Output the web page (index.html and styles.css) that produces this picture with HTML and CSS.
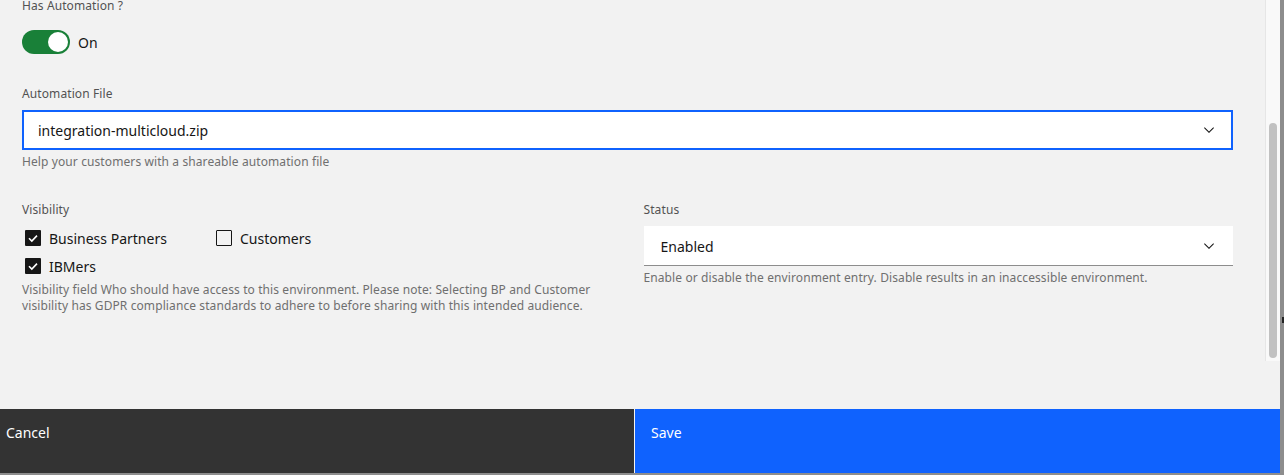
FILE: index.html
```html
<!DOCTYPE html>
<html lang="en">
<head>
<meta charset="utf-8">
<title>Environment settings</title>
<link rel="stylesheet" href="styles.css">
</head>
<body>
<div class="backdrop">
  <div class="modal">
    <div class="modal-body">
      <div class="content">
        <div class="form-item toggle-item">
          <div class="label label-first">Has Automation ?</div>
          <div class="toggle-row">
            <span class="toggle toggle-on"><span class="knob"></span></span>
            <span class="toggle-text">On</span>
          </div>
        </div>

        <div class="form-item file-item">
          <div class="label">Automation File</div>
          <div class="select select-focused">
            <span class="select-value">integration-multicloud.zip</span>
            <svg class="chevron" viewBox="0 0 16 16" width="16" height="16"><path d="M8 11L3 6l.7-.7L8 9.6l4.3-4.3.7.7z"/></svg>
          </div>
          <div class="helper">Help your customers with a shareable automation file</div>
        </div>

        <div class="row">
          <div class="col">
            <div class="label">Visibility</div>
            <div class="checks">
              <div class="check">
                <span class="box box-checked"><svg viewBox="0 0 16 16" width="16" height="16"><polyline points="4,8.2 6.8,11 12,5.6"/></svg></span>
                <span class="check-text">Business Partners</span>
              </div>
              <div class="check">
                <span class="box"></span>
                <span class="check-text">Customers</span>
              </div>
              <div class="check">
                <span class="box box-checked"><svg viewBox="0 0 16 16" width="16" height="16"><polyline points="4,8.2 6.8,11 12,5.6"/></svg></span>
                <span class="check-text">IBMers</span>
              </div>
            </div>
            <div class="helper">Visibility field Who should have access to this environment. Please note: Selecting BP and Customer visibility has GDPR compliance standards to adhere to before sharing with this intended audience.</div>
          </div>
          <div class="col">
            <div class="label">Status</div>
            <div class="select select-plain">
              <span class="select-value">Enabled</span>
              <svg class="chevron" viewBox="0 0 16 16" width="16" height="16"><path d="M8 11L3 6l.7-.7L8 9.6l4.3-4.3.7.7z"/></svg>
            </div>
            <div class="helper">Enable or disable the environment entry. Disable results in an inaccessible environment.</div>
          </div>
        </div>
      </div>
      <div class="scrollbar"><div class="thumb"></div></div>
    </div>
    <div class="modal-footer">
      <button class="btn btn-secondary" type="button">Cancel</button>
      <button class="btn btn-primary" type="button">Save</button>
    </div>
  </div>
  <span class="edge-mark"></span>
</div>
</body>
</html>
```

FILE: styles.css
```css
* { box-sizing: border-box; }

html, body {
  margin: 0;
  padding: 0;
}

body {
  width: 1284px;
  height: 475px;
  overflow: hidden;
  background: #8d8d8d;
  font-family: "Noto Sans", "Liberation Sans", sans-serif;
  color: #161616;
}

.backdrop {
  position: relative;
  width: 1284px;
  height: 475px;
}

.modal {
  width: 1280px;
  height: 473px;
  background: #f2f2f2;
  display: flex;
  flex-direction: column;
}

.modal-body {
  height: 361px;
  display: flex;
  overflow: hidden;
  margin-bottom: 48px;
}

.content {
  flex: 1;
  padding: 0 32px 0 22px;
}

.scrollbar {
  width: 15px;
  height: 361px;
  background: #f9f9f9;
  border-left: 1px solid #e6e6e6;
  padding: 123px 0 0 3px;
}

.thumb {
  width: 8px;
  height: 235px;
  border-radius: 4px;
  background: #c1c1c1;
}

/* labels & helpers */
.label {
  font-size: 12px;
  line-height: 16px;
  color: #525252;
  margin-bottom: 8px;
  letter-spacing: 0.1px;
}

.label-first {
  margin-top: -2px;
  margin-bottom: 0;
}

.helper {
  font-size: 12px;
  line-height: 16px;
  color: #6f6f6f;
  margin-top: 4px;
  letter-spacing: 0.1px;
}

/* toggle */
.toggle-row {
  display: flex;
  align-items: center;
  margin-top: 16px;
  height: 24px;
}

.toggle {
  position: relative;
  width: 48px;
  height: 24px;
  border-radius: 12px;
  background: #8d8d8d;
}

.toggle-on { background: #198038; }

.knob {
  position: absolute;
  top: 2px;
  right: 2px;
  width: 20px;
  height: 20px;
  border-radius: 50%;
  background: #ffffff;
}

.toggle-text {
  margin-left: 8px;
  font-size: 14px;
  line-height: 18px;
  padding-top: 1px;
  color: #161616;
}

/* selects */
.file-item { margin-top: 32px; }

.select {
  position: relative;
  display: flex;
  align-items: center;
  height: 40px;
  background: #ffffff;
  font-size: 14px;
  color: #161616;
  padding-top: 2px;
}

.select-focused {
  border: 2px solid #0f62fe;
  padding-left: 14px;
}

.select-focused .chevron { right: 14px; }

.select-plain {
  border-bottom: 1px solid #8d8d8d;
  padding-left: 17px;
}

.select-plain .chevron { right: 16px; }

.select-value { line-height: 18px; }

.chevron {
  position: absolute;
  top: 50%;
  margin-top: -8px;
  fill: #161616;
}

/* two-column row */
.row {
  margin-top: 32px;
  display: grid;
  grid-template-columns: 1fr 1fr;
  column-gap: 32px;
}

/* checkboxes */
.checks {
  display: grid;
  grid-template-columns: 191px 191px;
  row-gap: 4px;
}

.check {
  display: flex;
  align-items: center;
  height: 24px;
}

.box {
  width: 16px;
  height: 16px;
  margin: 0 8px 0 3px;
  border: 1px solid #161616;
  border-radius: 1px;
}

.box-checked {
  background: #161616;
  border: none;
}

.box svg {
  display: block;
  fill: none;
  stroke: #ffffff;
  stroke-width: 1.6;
}

.check-text {
  font-size: 14px;
  line-height: 18px;
  padding-top: 1px;
  color: #161616;
}

/* footer */
.modal-footer {
  display: flex;
  height: 64px;
  gap: 1px;
}

.btn {
  border: none;
  margin: 0;
  height: 64px;
  font-family: inherit;
  font-size: 14px;
  line-height: 18px;
  color: #ffffff;
  text-align: left;
  display: flex;
  align-items: flex-start;
  padding-top: 15px;
}

.btn-secondary {
  width: 634px;
  background: #333333;
  padding-left: 6px;
}

.btn-primary {
  flex: 1;
  background: #0f62fe;
  padding-left: 16px;
}

.edge-mark {
  position: absolute;
  left: 1282px;
  top: 317px;
  width: 2px;
  height: 6px;
  background: #222222;
}
```
